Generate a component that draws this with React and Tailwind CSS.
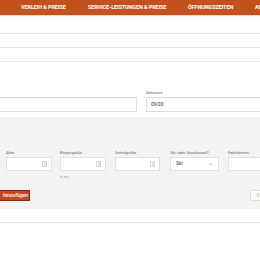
import { ChevronDown } from 'lucide-react'

const navItems = [
  { label: 'Verleih & Preise', w: 'w-[67px]' },
  { label: 'Service-Leistungen & Preise', w: 'w-[100px]' },
  { label: 'Öffnungszeiten', w: 'w-[67px]' },
  { label: 'Anfahrt', w: 'w-[40px]' },
]

function Spinner() {
  return (
    <div className="flex flex-col items-center justify-center w-[5px] h-[6px] border border-[#d6d6d6] text-[#9a9a9a]">
      <div className="w-0 h-0 border-l-[1.5px] border-r-[1.5px] border-b-[1.5px] border-l-transparent border-r-transparent border-b-[#9a9a9a]" />
      <div className="mt-[1px] w-0 h-0 border-l-[1.5px] border-r-[1.5px] border-t-[1.5px] border-l-transparent border-r-transparent border-t-[#9a9a9a]" />
    </div>
  )
}

function Field({ label, hint, children, className }) {
  return (
    <div className={`shrink-0 ${className}`}>
      <p className="h-[7px] text-[4px] leading-[6px] text-[#666] whitespace-nowrap">{label}</p>
      {children}
      {hint && <p className="mt-[4px] text-[3.5px] leading-[5px] text-[#999]">{hint}</p>}
    </div>
  )
}

export default function App() {
  return (
    <div className="w-[260px] h-[260px] overflow-hidden bg-white font-['Roboto',sans-serif] relative">
      {/* Header */}
      <header className="h-[15px] bg-[#c4511c] flex items-center pl-[21px] overflow-hidden shadow-[0_1px_1px_rgba(0,0,0,0.15)]">
        {navItems.map(({ label, w }) => (
          <span
            key={label}
            className={`${w} shrink-0 text-[5.5px] font-bold uppercase tracking-[-0.02em] text-white whitespace-nowrap`}
          >
            {label}
          </span>
        ))}
      </header>

      {/* Top lines */}
      <div className="mt-[18px] -mx-px">
        <div className="h-[14px] border-t border-[#e6e6e6]" />
        <div className="h-[14px] border-t border-[#e6e6e6]" />
        <div className="h-px border-t border-[#e6e6e6]" />
      </div>

      {/* Abholung row */}
      <div className="mt-[28px] flex gap-[9px] -ml-px -mr-[20px]">
        <Field label="" className="w-[138px]">
          <div className="h-[15px] border border-[#dcdcdc] bg-white" />
        </Field>
        <Field label="Abholzeit" className="flex-1">
          <div className="h-[15px] border border-[#dcdcdc] bg-white flex items-center pl-[4px] text-[5px] text-[#333]">
            09:00
          </div>
        </Field>
      </div>

      {/* Person panel */}
      <div className="mt-[5px] h-[92px] bg-[#f3f3f3] pt-[33px] overflow-hidden">
        <div className="flex pl-[6px]">
          <Field label="Alter" className="w-[46px] mr-[8px]">
            <div className="h-[14px] border border-[#e0e0e0] bg-white flex items-center justify-end pr-[4px]">
              <Spinner />
            </div>
          </Field>
          <Field label="Körpergröße" hint="in cm" className="w-[46px] mr-[9px]">
            <div className="h-[14px] border border-[#e0e0e0] bg-white flex items-center justify-end pr-[4px]">
              <Spinner />
            </div>
          </Field>
          <Field label="Schuhgröße" className="w-[45px] mr-[10px]">
            <div className="h-[14px] border border-[#e0e0e0] bg-white flex items-center justify-end pr-[4px]">
              <Spinner />
            </div>
          </Field>
          <Field label="Ski- oder Snowboard?" className="w-[49px] mr-[9px]">
            <div className="h-[14px] border border-[#e0e0e0] bg-white flex items-center justify-between pl-[5px] pr-[5px] text-[5px] text-[#333]">
              <span>Ski</span>
              <ChevronDown size={5} strokeWidth={2} className="text-[#666]" />
            </div>
          </Field>
          <Field label="Fahrkönnen" className="w-[60px]">
            <div className="h-[14px] border border-[#e0e0e0] bg-white" />
          </Field>
        </div>

        <div className="mt-[10px] flex justify-between -ml-[10px] -mr-[40px]">
          <button className="h-[11px] w-[40px] pr-[1px] text-right bg-[#c4481c] border border-[#8e2410] text-white text-[5px] font-medium leading-[9px] whitespace-nowrap">
            hinzufügen
          </button>
          <button className="h-[11px] w-[50px] shrink-0 pl-[3px] text-left bg-white border border-[#e3d9d5] text-[#c9b2a8] text-[5px] leading-[9px] whitespace-nowrap overflow-hidden">
            - Reihe entfernen
          </button>
        </div>
      </div>

      {/* Bottom line */}
      <div className="mt-[13px] h-px bg-[#e3e3e3]" />
    </div>
  )
}
